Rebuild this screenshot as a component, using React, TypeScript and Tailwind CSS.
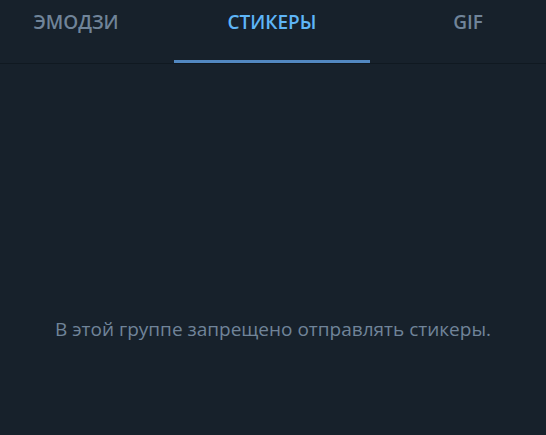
export default function App() {
  const tabs = ["ЭМОДЗИ", "СТИКЕРЫ", "GIF"];
  const active = 1;

  return (
    <div
      className="w-[546px] h-[435px] bg-[#17212b] overflow-hidden flex flex-col"
      style={{ fontFamily: '"Open Sans", sans-serif' }}
    >
      {/* вкладки */}
      <div className="h-[64px] border-b border-[#101921] flex shrink-0">
        <div className="flex ml-[-22px]">
          {tabs.map((t, i) => (
            <div
              key={t}
              className="w-[196px] h-[63px] relative flex items-start justify-center pt-[9px]"
            >
              <span
                className={
                  i === active
                    ? "text-[19px] leading-[26px] font-semibold text-[#5eb5f7]"
                    : "text-[19px] leading-[26px] font-semibold text-[#708499]"
                }
              >
                {t}
              </span>
              {i === active && (
                <div className="absolute left-0 right-0 bottom-0 h-[3px] bg-[#5288c1]" />
              )}
            </div>
          ))}
        </div>
      </div>

      {/* пусто */}
      <div className="flex-1 flex justify-center pt-[252px]">
        <p className="text-[19px] leading-[26px] text-[#708499]">
          В этой группе запрещено отправлять стикеры.
        </p>
      </div>
    </div>
  );
}
